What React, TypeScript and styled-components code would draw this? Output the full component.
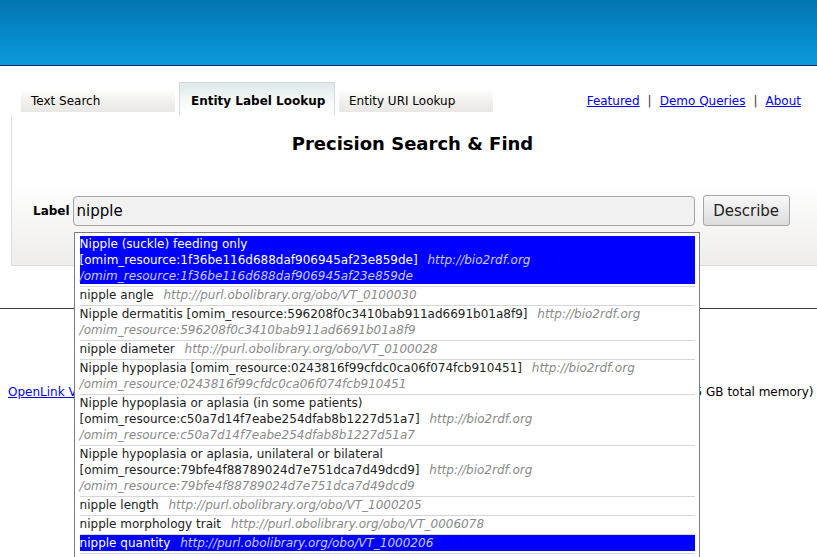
import React from 'react';
import styled, {createGlobalStyle, css} from 'styled-components';

const GlobalStyle = createGlobalStyle`
  html {
    overflow: hidden;
  }
  body {
    margin: 0;
    padding: 0;
    background: #fff;
    font-family: "DejaVu Sans", Verdana, sans-serif;
    font-size: 12px;
    color: #000;
  }
`

type Suggestion = {
    label: string
    host: string
    path?: string
    selected?: boolean
}

const BIO2RDF = 'http://bio2rdf.org'
const PURL = 'http://purl.obolibrary.org/obo/'

const suggestions: Suggestion[] = [
    {label: 'Nipple (suckle) feeding only [omim_resource:1f36be116d688daf906945af23e859de]', host: BIO2RDF, path: '/omim_resource:1f36be116d688daf906945af23e859de', selected: true},
    {label: 'nipple angle', host: PURL + 'VT_0100030'},
    {label: 'Nipple dermatitis [omim_resource:596208f0c3410bab911ad6691b01a8f9]', host: BIO2RDF, path: '/omim_resource:596208f0c3410bab911ad6691b01a8f9'},
    {label: 'nipple diameter', host: PURL + 'VT_0100028'},
    {label: 'Nipple hypoplasia [omim_resource:0243816f99cfdc0ca06f074fcb910451]', host: BIO2RDF, path: '/omim_resource:0243816f99cfdc0ca06f074fcb910451'},
    {label: 'Nipple hypoplasia or aplasia (in some patients) [omim_resource:c50a7d14f7eabe254dfab8b1227d51a7]', host: BIO2RDF, path: '/omim_resource:c50a7d14f7eabe254dfab8b1227d51a7'},
    {label: 'Nipple hypoplasia or aplasia, unilateral or bilateral [omim_resource:79bfe4f88789024d7e751dca7d49dcd9]', host: BIO2RDF, path: '/omim_resource:79bfe4f88789024d7e751dca7d49dcd9'},
    {label: 'nipple length', host: PURL + 'VT_1000205'},
    {label: 'nipple morphology trait', host: PURL + 'VT_0006078'},
    {label: 'nipple quantity', host: PURL + 'VT_1000206', selected: true},
]

const Page = styled.div`
  position: relative;
  min-height: 557px;
`

const Header = styled.div`
  height: 65px;
  background: linear-gradient(to bottom, #0275b0 0%, #0a9ade 100%);
  border-bottom: 1px solid #1b2b6b;
`

const TabBar = styled.div`
  display: flex;
  align-items: flex-end;
  height: 32px;
  margin-top: 17px;
  padding-left: 21px;
  padding-right: 16px;
`

const Tab = styled.div<{ $active?: boolean, $width: number }>`
  width: ${props => props.$width}px;
  box-sizing: border-box;
  margin-right: 4px;
  display: flex;
  align-items: center;
  font-size: 12px;
  ${props => props.$active ? css`
    height: 33px;
    padding: 3px 0 0 11px;
    font-weight: bold;
    background: linear-gradient(to bottom, #dde8ea 0%, #f6f9f9 55%, #fff 100%);
    border: 1px solid #d5dbdc;
    border-bottom: none;
  ` : css`
    height: 23px;
    margin-bottom: 3px;
    padding-left: 10px;
    background: linear-gradient(to bottom, #ffffff 0%, #f3f2ef 45%, #e9e7e3 100%);
  `}
`

const NavLinks = styled.div`
  margin-left: auto;
  align-self: center;
  margin-top: 3px;
  display: flex;
  align-items: center;
  font-size: 12px;
`

const NavLink = styled.a`
  color: #0000ee;
  text-decoration: underline;
`

const Pipe = styled.span`
  margin: 0 8px;
  color: #333;
`

const Panel = styled.div`
  margin-left: 11px;
  height: 150px;
  border-left: 1px solid #dcdcdc;
  border-bottom: 1px solid #dcdcdc;
  background: linear-gradient(to bottom, #ffffff 0%, #ffffff 45%, #eeedeb 100%);
  display: flex;
  flex-direction: column;
`

const Title = styled.h1`
  margin: 18px 0 0;
  padding-right: 4px;
  font-size: 18px;
  line-height: 22px;
  text-align: center;
`

const SearchRow = styled.div`
  display: flex;
  align-items: center;
  margin-top: 40px;
  padding-left: 21px;
`

const FieldLabel = styled.label`
  font-weight: bold;
  font-size: 12px;
  margin-right: 3px;
`

const InputWrap = styled.div`
  position: relative;
`

const Input = styled.div`
  width: 622px;
  height: 30px;
  box-sizing: border-box;
  border: 1px solid #a3a3a3;
  border-radius: 4px;
  background: #f2f2f2;
  font-size: 15px;
  line-height: 28px;
  padding-left: 3px;
`

const Button = styled.button`
  margin-left: 8px;
  width: 87px;
  height: 31px;
  border: 1px solid #a6a6a6;
  border-radius: 3px;
  background: linear-gradient(to bottom, #f8f8f8 0%, #dcdcdc 100%);
  font-family: "DejaVu Sans", Verdana, sans-serif;
  font-size: 15px;
  color: #222;
  padding: 0;
`

const Dropdown = styled.div`
  position: absolute;
  left: 1px;
  top: 36px;
  width: 626px;
  height: 326px;
  overflow: hidden;
  box-sizing: border-box;
  border: 1px solid #7c7c7c;
  border-bottom: none;
  background: #fff;
  padding: 3px 4px 0 5px;
  z-index: 10;
`

const Item = styled.div`
  border-bottom: 1px solid #d6d6d6;
  padding-bottom: 2px;
`

const ItemBody = styled.div<{ $selected?: boolean }>`
  font-size: 12px;
  line-height: 16px;
  color: ${props => props.$selected ? '#fff' : '#222'};
  background: ${props => props.$selected ? '#0000ff' : 'transparent'};
`

const Uri = styled.i<{ $selected?: boolean }>`
  margin-left: 6px;
  color: ${props => props.$selected ? '#c9c9f5' : '#8a8a8a'};
`

const Rule = styled.hr`
  margin: 42px 0 0;
  border: none;
  border-top: 1px solid #3a3a3a;
`

const Footer = styled.div`
  margin-top: 76px;
  padding: 0 5px 0 8px;
  font-size: 12px;
  line-height: 14px;
  text-align: center;
  white-space: nowrap;
`

const App: React.FC = () => {
    return <Page>
        <GlobalStyle/>
        <Header/>
        <TabBar>
            <Tab $width={154}>Text Search</Tab>
            <Tab $width={156} $active>Entity Label Lookup</Tab>
            <Tab $width={154}>Entity URI Lookup</Tab>
            <NavLinks>
                <NavLink href="#">Featured</NavLink>
                <Pipe>|</Pipe>
                <NavLink href="#">Demo Queries</NavLink>
                <Pipe>|</Pipe>
                <NavLink href="#">About</NavLink>
            </NavLinks>
        </TabBar>
        <Panel>
            <Title>Precision Search &amp; Find</Title>
            <SearchRow>
                <FieldLabel>Label</FieldLabel>
                <InputWrap>
                    <Input>nipple</Input>
                    <Dropdown>
                        {suggestions.map(s =>
                            <Item key={s.label}>
                                <ItemBody $selected={s.selected}>
                                    {s.label}{'\u00a0'}
                                    <Uri $selected={s.selected}>{s.host}{s.path && <><wbr/>{s.path}</>}</Uri>
                                </ItemBody>
                            </Item>
                        )}
                    </Dropdown>
                </InputWrap>
                <Button>Describe</Button>
            </SearchRow>
        </Panel>
        <Rule/>
        <Footer>
            <NavLink href="#">OpenLink Virtuoso version 07.20.3229</NavLink> as of Mar 19 2018, on Linux (x86_64-pc-linux-gnu), Single Server Edition (15 GB total memory)
        </Footer>
    </Page>
}

export default App
